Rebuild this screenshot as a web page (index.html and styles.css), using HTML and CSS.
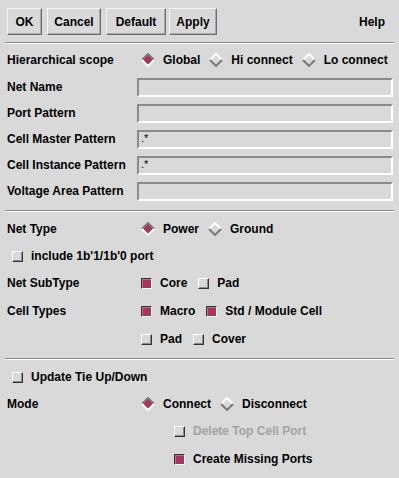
FILE: index.html
```html
<!DOCTYPE html>
<html>
<head>
<meta charset="utf-8">
<link rel="stylesheet" href="styles.css">
</head>
<body>
<div class="dialog">
  <div class="toolbar">
    <button class="btn btn-ok">OK</button>
    <button class="btn btn-cancel">Cancel</button>
    <button class="btn btn-default">Default</button>
    <button class="btn btn-apply">Apply</button>
    <span class="help">Help</span>
  </div>
  <div class="sep"></div>

  <div class="section s1">
    <div class="row r28">
      <span class="label">Hierarchical scope</span>
      <div class="opts">
        <span class="opt"><svg class="dia" viewBox="0 0 14 14"><polygon points="7,1 13,7 7,13 1,7" class="dfill-on"/><polyline points="1,7 7,1 13,7" class="dedge-dark"/><polyline points="1,7 7,13 13,7" class="dedge-light"/></svg>Global</span>
        <span class="opt"><svg class="dia" viewBox="0 0 14 14"><polygon points="7,1 13,7 7,13 1,7" class="dfill-off"/><polyline points="1,7 7,1 13,7" class="dedge-light"/><polyline points="1,7 7,13 13,7" class="dedge-dark"/></svg>Hi connect</span>
        <span class="opt"><svg class="dia" viewBox="0 0 14 14"><polygon points="7,1 13,7 7,13 1,7" class="dfill-off"/><polyline points="1,7 7,1 13,7" class="dedge-light"/><polyline points="1,7 7,13 13,7" class="dedge-dark"/></svg>Lo connect</span>
      </div>
    </div>
    <div class="row r26">
      <span class="label">Net Name</span>
      <div class="entry"></div>
    </div>
    <div class="row r26">
      <span class="label">Port Pattern</span>
      <div class="entry"></div>
    </div>
    <div class="row r26">
      <span class="label">Cell Master Pattern</span>
      <div class="entry">.*</div>
    </div>
    <div class="row r26">
      <span class="label">Cell Instance Pattern</span>
      <div class="entry">.*</div>
    </div>
    <div class="row r26">
      <span class="label">Voltage Area Pattern</span>
      <div class="entry"></div>
    </div>
  </div>
  <div class="sep"></div>

  <div class="section s2">
    <div class="row r28">
      <span class="label">Net Type</span>
      <div class="opts">
        <span class="opt"><svg class="dia" viewBox="0 0 14 14"><polygon points="7,1 13,7 7,13 1,7" class="dfill-on"/><polyline points="1,7 7,1 13,7" class="dedge-dark"/><polyline points="1,7 7,13 13,7" class="dedge-light"/></svg>Power</span>
        <span class="opt"><svg class="dia" viewBox="0 0 14 14"><polygon points="7,1 13,7 7,13 1,7" class="dfill-off"/><polyline points="1,7 7,1 13,7" class="dedge-light"/><polyline points="1,7 7,13 13,7" class="dedge-dark"/></svg>Ground</span>
      </div>
    </div>
    <div class="row r26 indent">
      <span class="opt"><span class="cb"></span>include 1b'1/1b'0 port</span>
    </div>
    <div class="row r28">
      <span class="label">Net SubType</span>
      <div class="opts cbopts">
        <span class="opt"><span class="cb on"></span>Core</span>
        <span class="opt"><span class="cb"></span>Pad</span>
      </div>
    </div>
    <div class="row r28">
      <span class="label">Cell Types</span>
      <div class="opts cbopts">
        <span class="opt"><span class="cb on"></span>Macro</span>
        <span class="opt"><span class="cb on"></span>Std / Module Cell</span>
      </div>
    </div>
    <div class="row r28">
      <span class="label"></span>
      <div class="opts cbopts">
        <span class="opt"><span class="cb"></span>Pad</span>
        <span class="opt"><span class="cb"></span>Cover</span>
      </div>
    </div>
  </div>
  <div class="sep"></div>

  <div class="section s3">
    <div class="row r26 indent">
      <span class="opt"><span class="cb"></span>Update Tie Up/Down</span>
    </div>
    <div class="row r27">
      <span class="label">Mode</span>
      <div class="opts">
        <span class="opt"><svg class="dia" viewBox="0 0 14 14"><polygon points="7,1 13,7 7,13 1,7" class="dfill-on"/><polyline points="1,7 7,1 13,7" class="dedge-dark"/><polyline points="1,7 7,13 13,7" class="dedge-light"/></svg>Connect</span>
        <span class="opt"><svg class="dia" viewBox="0 0 14 14"><polygon points="7,1 13,7 7,13 1,7" class="dfill-off"/><polyline points="1,7 7,1 13,7" class="dedge-light"/><polyline points="1,7 7,13 13,7" class="dedge-dark"/></svg>Disconnect</span>
      </div>
    </div>
    <div class="row r28 sub">
      <span class="opt disabled"><span class="cb"></span>Delete Top Cell Port</span>
    </div>
    <div class="row r28 sub">
      <span class="opt"><span class="cb on"></span>Create Missing Ports</span>
    </div>
  </div>
</div>
</body>
</html>
```

FILE: styles.css
```css
html, body {
  margin: 0;
  padding: 0;
  background: #d9d9d9;
}
body {
  font-family: "Liberation Sans", Arial, sans-serif;
  font-weight: bold;
  font-size: 12px;
  color: #000;
  width: 399px;
  height: 478px;
  overflow: hidden;
}
.dialog {
  padding: 0 5px 0 5px;
}
.toolbar {
  display: flex;
  align-items: center;
  height: 27px;
  margin-top: 8px;
  padding-left: 2px;
  gap: 5px;
}
.btn {
  font: inherit;
  color: #000;
  background: #d9d9d9;
  height: 27px;
  padding: 0;
  margin: 0;
  border: 1px solid;
  border-color: #f4f4f4 #6e6e6e #6e6e6e #f4f4f4;
  box-shadow: inset -1px -1px 0 #a8a8a8;
}
.btn-ok { width: 35px; }
.btn-cancel { width: 54px; }
.btn-default { width: 60px; margin-left: 0; }
.btn-apply { width: 48px; margin-left: -2px; }
.help {
  margin-left: auto;
  margin-right: 9px;
}
.sep {
  margin-top: 7px;
  height: 0;
  border-top: 1px solid #8a8a8a;
  border-bottom: 1px solid #ffffff;
}
.section.s1 { padding-top: 2px; padding-bottom: 6px; }
.section.s2 { padding-top: 3px; padding-bottom: 5px; }
.section.s3 { padding-top: 4px; }
.section + .sep { margin-top: 0; }
.row {
  display: flex;
  align-items: center;
  padding-left: 2px;
}
.r26 { height: 26px; }
.r27 { height: 27px; }
.r28 { height: 28px; }
.label {
  width: 130px;
  flex: none;
  white-space: nowrap;
}
.entry {
  flex: 1;
  height: 19px;
  box-sizing: border-box;
  border: 2px solid;
  border-color: #8a8a8a #ffffff #ffffff #8a8a8a;
  margin-right: 1px;
  font-weight: normal;
  font-size: 11px;
  line-height: 13px;
  padding-left: 2px;
}
.opts {
  display: flex;
  align-items: center;
  margin-left: 4px;
}
.opt {
  display: flex;
  align-items: center;
  white-space: nowrap;
  margin-right: 9px;
}
.dia {
  width: 14px;
  height: 14px;
  margin-right: 8px;
  flex: none;
}
.dfill-on { fill: #b03060; stroke: none; }
.dfill-off { fill: #d9d9d9; stroke: none; }
.dedge-dark { fill: none; stroke: #7a7a7a; stroke-width: 2; }
.dedge-light { fill: none; stroke: #ffffff; stroke-width: 2; }
.cbopts { margin-left: 4px; }
.cbopts .opt { margin-right: 11px; }
.cb {
  width: 11px;
  height: 11px;
  box-sizing: border-box;
  flex: none;
  margin-right: 8px;
  background: #d9d9d9;
  border: 1px solid;
  border-color: #ffffff #333333 #333333 #ffffff;
  box-shadow: inset -1px -1px 0 #8a8a8a;
}
.cb.on {
  background: #b03060;
  border-color: #333333 #ffffff #ffffff #333333;
  box-shadow: inset 1px 1px 0 #8a8a8a;
}
.indent { padding-left: 7px; }
.sub { padding-left: 169px; }
.disabled { color: #a3a3a3; }
```
